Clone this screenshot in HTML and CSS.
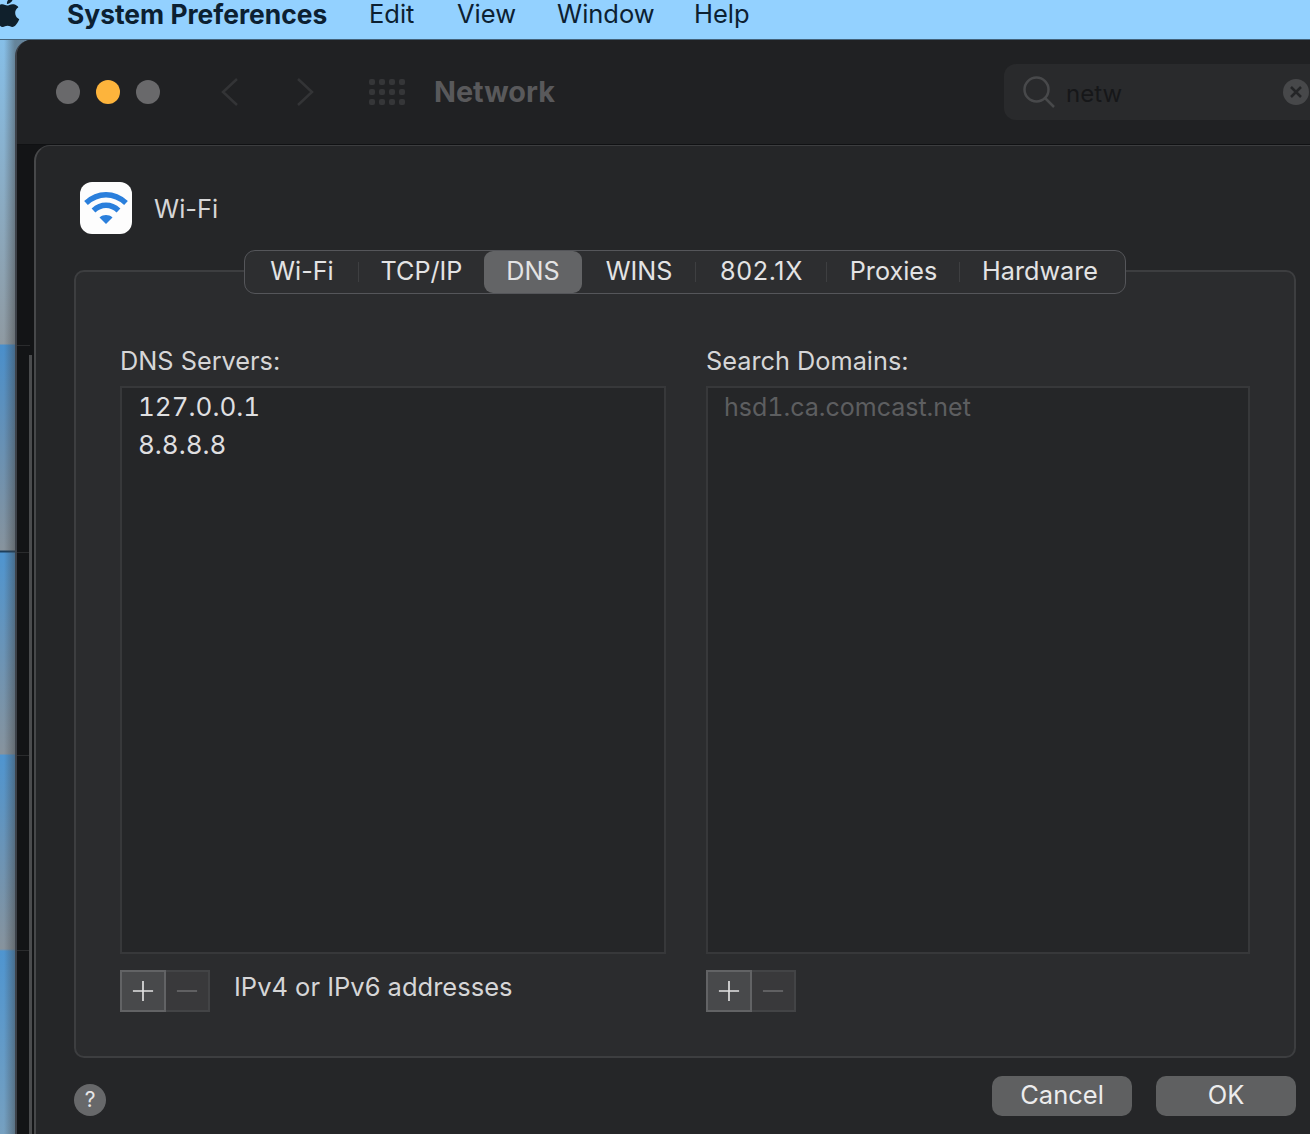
FILE: index.html
```html
<!DOCTYPE html>
<html lang="en">
<head>
    <meta charset="UTF-8">
    <meta name="viewport" content="width=device-width, initial-scale=1.0">
    <title>Network - DNS</title>
    <link rel="stylesheet" href="styles.css">
</head>
<body>
    <div class="menubar">
        <svg class="apple" viewBox="0 0 24 24"><path d="M12.152 6.896c-.948 0-2.415-1.078-3.96-1.04-2.04.027-3.91 1.183-4.961 3.014-2.117 3.675-.546 9.103 1.519 12.09 1.013 1.454 2.208 3.09 3.792 3.039 1.52-.065 2.09-.987 3.935-.987 1.831 0 2.35.987 3.96.948 1.637-.026 2.676-1.48 3.676-2.948 1.156-1.688 1.636-3.325 1.662-3.415-.039-.013-3.182-1.221-3.22-4.857-.026-3.04 2.48-4.494 2.597-4.559-1.429-2.09-3.623-2.324-4.39-2.376-2-.156-3.675 1.09-4.61 1.09zM15.53 3.83c.843-1.012 1.4-2.427 1.245-3.83-1.207.052-2.662.805-3.532 1.818-.78.896-1.454 2.338-1.273 3.714 1.338.104 2.715-.688 3.559-1.701"/></svg>
        <span class="menu-app">System Preferences</span>
        <span class="menu-item">Edit</span>
        <span class="menu-item">View</span>
        <span class="menu-item">Window</span>
        <span class="menu-item">Help</span>
    </div>

    <div class="window">
        <div class="titlebar">
            <div class="lights">
                <span class="light"></span>
                <span class="light light-on"></span>
                <span class="light"></span>
            </div>
            <svg class="chevron chevron-back" viewBox="0 0 20 30"><path d="M17 2 3 15l14 13"/></svg>
            <svg class="chevron chevron-next" viewBox="0 0 20 30"><path d="M3 2l14 13L3 28"/></svg>
            <div class="grid-icon">
                <i></i><i></i><i></i><i></i><i></i><i></i><i></i><i></i><i></i><i></i><i></i><i></i>
            </div>
            <span class="window-title">Network</span>
            <div class="search">
                <svg class="search-icon" viewBox="0 0 32 32"><circle cx="13.5" cy="13.5" r="12"/><path d="M22 22l9 9"/></svg>
                <span class="search-text">netw</span>
                <svg class="search-clear" viewBox="0 0 26 26"><circle cx="13" cy="13" r="13"/><path d="M8 8l10 10M18 8 8 18"/></svg>
            </div>
        </div>

        <div class="sheet">
            <div class="sheet-head">
                <div class="wifi-icon">
                    <svg viewBox="0 0 52 52"><path d="M6 21C18 10 34 10 46 21M13.500 28.500C21 21.500 31 21.500 38.500 28.500" /><path class="wifi-dot" d="M19.500 35.500C23.500 32.300 28.500 32.300 32.500 35.500L26 42z"/></svg>
                </div>
                <span class="sheet-title">Wi-Fi</span>
            </div>

            <div class="panel">
                <div class="tabs">
                    <span class="tab tab-wifi">Wi-Fi</span>
                    <span class="tab tab-tcp">TCP/IP</span>
                    <span class="tab tab-dns active">DNS</span>
                    <span class="tab tab-wins">WINS</span>
                    <span class="tab tab-8021">802.1X</span>
                    <span class="tab tab-proxies">Proxies</span>
                    <span class="tab tab-hardware">Hardware</span>
                </div>

                <div class="columns">
                    <div class="column column-dns">
                        <div class="list-label">DNS Servers:</div>
                        <div class="list">
                            <div class="list-row">127.0.0.1</div>
                            <div class="list-row">8.8.8.8</div>
                        </div>
                        <div class="list-foot">
                            <div class="stepper">
                                <span class="step step-add"><svg viewBox="0 0 24 24"><path d="M12 1v22M1 12h22"/></svg></span>
                                <span class="step step-remove"><svg viewBox="0 0 24 24"><path d="M1 12h22"/></svg></span>
                            </div>
                            <span class="hint">IPv4 or IPv6 addresses</span>
                        </div>
                    </div>
                    <div class="column column-search">
                        <div class="list-label">Search Domains:</div>
                        <div class="list">
                            <div class="list-row muted">hsd1.ca.comcast.net</div>
                        </div>
                        <div class="list-foot">
                            <div class="stepper">
                                <span class="step step-add"><svg viewBox="0 0 24 24"><path d="M12 1v22M1 12h22"/></svg></span>
                                <span class="step step-remove"><svg viewBox="0 0 24 24"><path d="M1 12h22"/></svg></span>
                            </div>
                        </div>
                    </div>
                </div>
            </div>

            <div class="sheet-foot">
                <span class="help">?</span>
                <div class="actions">
                    <button class="btn">Cancel</button>
                    <button class="btn">OK</button>
                </div>
            </div>
        </div>
    </div>
</body>
</html>
```

FILE: styles.css
```css
* {
    box-sizing: border-box;
}
html, body {
    height: 100%;
}
body {
    margin: 0;
    height: 1134px;
    overflow: hidden;
    font-family: Inter, "Liberation Sans", sans-serif;
    /* wallpaper strip at the left edge, window shadow on top of it */
    background:
        linear-gradient(to right, rgba(60, 60, 60, 0) 4px, rgba(60, 60, 60, .45) 15px),
        linear-gradient(to bottom,
            #86bfe8 39px, #8f9aa2 344px,
            #4a8fcb 345px, #87939d 550px,
            #1d3f5c 551px, #1d3f5c 552px,
            #4f95d0 553px, #87939d 754px,
            #4f95d0 755px, #87939d 949px,
            #4f95d0 951px, #76a0c0 1134px);
}

/* menu bar */
.menubar {
    height: 40px;
    background-color: #93d1ff;
    color: #0c2031;
    display: flex;
    font-size: 25.5px;
    line-height: 28px;
    padding-left: 67px;
    position: relative;
    border-bottom: 1px solid #44627a;
}
.apple {
    position: absolute;
    left: -8px;
    top: -3px;
    width: 30px;
    height: 30px;
    fill: #10202c;
}
.menu-app {
    font-size: 26.4px;
    font-weight: 700;
    width: 302px;
}
.menu-item:nth-child(3) { width: 88px; }
.menu-item:nth-child(4) { width: 100px; }
.menu-item:nth-child(5) { width: 137px; }

/* window */
.window {
    margin-left: 15px;
    height: 1094px;
    /* second window edge and its seams, seen beside the sheet */
    background:
        linear-gradient(#4a4b4d, #4a4b4d) 12px 315px / 3px 100% no-repeat,
        linear-gradient(#2a2b2d, #2a2b2d) 0 305px / 13px 1px no-repeat,
        linear-gradient(#2a2b2d, #2a2b2d) 0 512px / 13px 1px no-repeat,
        linear-gradient(#2a2b2d, #2a2b2d) 0 715px / 13px 1px no-repeat,
        linear-gradient(#2a2b2d, #2a2b2d) 0 910px / 13px 1px no-repeat,
        #131416;
    border-top-left-radius: 16px;
    border-left: 2px solid #3d4148;
    overflow: hidden;
}
.titlebar {
    height: 105px;
    background-color: #202123;
    display: flex;
    align-items: center;
    position: relative;
    border-bottom: 1px solid #101113;
}
.lights {
    display: flex;
    gap: 16px;
    margin-left: 39px;
}
.light {
    width: 24px;
    height: 24px;
    border-radius: 50%;
    background-color: #69696b;
}
.light-on {
    background-color: #fdb43c;
}
.chevron {
    width: 20px;
    height: 30px;
    fill: none;
    stroke: #333436;
    stroke-width: 2.500;
}
.chevron-back { margin-left: 60px; }
.chevron-next { margin-left: 55px; }
.grid-icon {
    display: grid;
    grid-template-columns: repeat(4, 6px);
    grid-auto-rows: 6px;
    gap: 4px;
    margin-left: 54px;
}
.grid-icon i {
    background-color: #353638;
    border-radius: 2px;
}
.window-title {
    margin-left: 29px;
    padding-bottom: 2px;
    font-size: 28.8px;
    font-weight: 700;
    color: #59595b;
}
.search {
    position: absolute;
    left: 987px;
    top: 24px;
    width: 330px;
    height: 56px;
    background-color: #292a2c;
    border-radius: 12px;
    display: flex;
    align-items: center;
}
.search-icon {
    width: 32px;
    height: 32px;
    margin-left: 19px;
    fill: none;
    stroke: #48494b;
    stroke-width: 2.500;
}
.search-text {
    margin-left: 11px;
    padding-top: 3px;
    font-size: 24px;
    color: #161719;
}
.search-clear {
    position: absolute;
    left: 279px;
    top: 15px;
    width: 26px;
    height: 26px;
}
.search-clear circle { fill: #47484a; }
.search-clear path {
    stroke: #242527;
    stroke-width: 2.500;
}

/* sheet */
.sheet {
    margin-left: 17px;
    height: 989px;
    background-color: #252628;
    border-top-left-radius: 16px;
    border-left: 2px solid #47484a;
    border-top: 1px solid #3c3d3f;
    padding: 36px 14px 0 38px;
}
.sheet-head {
    display: flex;
    align-items: center;
    gap: 22px;
    margin-left: 6px;
    height: 52px;
}
.wifi-icon {
    width: 52px;
    height: 52px;
    border-radius: 12px;
    background-color: #fdfdfd;
}
.wifi-icon svg {
    display: block;
    fill: none;
    stroke: #2a7fdc;
    stroke-width: 5.500;
}
.wifi-dot {
    fill: #2a7fdc;
    stroke: none;
}
.sheet-title {
    font-size: 25.5px;
    color: #d6d6d7;
}
.panel {
    margin-top: 36px;
    height: 788px;
    background-color: #2b2c2e;
    border: 2px solid #3d3e40;
    border-radius: 10px;
    position: relative;
}
.tabs {
    position: absolute;
    left: 168px;
    top: -22px;
    width: 882px;
    height: 44px;
    display: flex;
    background-color: #2d2e30;
    border: 1px solid #55565a;
    border-radius: 11px;
    font-size: 25.2px;
    line-height: 40px;
    color: #e3e3e4;
}
.tab {
    text-align: center;
    position: relative;
}
.tab-wifi { width: 114px; }
.tab-tcp { width: 125px; }
.tab-dns { width: 98px; }
.tab-wins { width: 114px; }
.tab-8021 { width: 131px; letter-spacing: .6px; }
.tab-proxies { width: 133px; }
.tab-hardware { flex: 1; padding-right: 5px; }
.tab-wifi::after, .tab-wins::after, .tab-8021::after, .tab-proxies::after {
    content: "";
    position: absolute;
    right: 0;
    top: 11px;
    height: 20px;
    width: 1px;
    background-color: #3e3f41;
}
.active {
    background-color: #636466;
    border-radius: 9px;
    height: 42px;
}
.columns {
    display: flex;
    padding: 72px 0 0 44px;
}
.column-dns { width: 586px; }
.column-search { width: 544px; }
.list-label {
    font-size: 25.3px;
    line-height: 34px;
    color: #d6d6d7;
}
.column-dns .list { width: 546px; }
.list {
    margin-top: 8px;
    height: 568px;
    background-color: #252628;
    border: 2px solid #37383a;
    padding-top: 1px;
    font-size: 26px;
    color: #dfdfe0;
    font-variant-numeric: tabular-nums;
}
.list-row {
    height: 38px;
    line-height: 36px;
    padding-left: 16px;
}
.muted {
    font-size: 25px;
    color: #5d5e60;
}
.list-foot {
    display: flex;
    align-items: center;
    margin-top: 16px;
    gap: 24px;
}
.stepper {
    display: flex;
    width: 90px;
    height: 42px;
}
.step {
    display: flex;
    align-items: center;
    justify-content: center;
    height: 42px;
    flex: 1;
    background-color: #39393b;
    border: 2px solid #434446;
    border-left: 0;
}
.step svg {
    width: 22px;
    height: 22px;
    fill: none;
    stroke: #69696b;
    stroke-width: 1.800;
}
.step-add {
    flex: 0 0 46px;
    background-color: #48494b;
    border: 2px solid #626365;
}
.step-add svg {
    stroke: #e2e2e3;
}
.hint {
    font-size: 25.5px;
    color: #d6d6d7;
    margin-top: -10px;
}

.sheet-foot {
    display: flex;
    justify-content: space-between;
    align-items: flex-start;
    margin-top: 18px;
    width: 1222px;
}
.help {
    margin-top: 8px;
    width: 32px;
    height: 32px;
    border-radius: 50%;
    background-color: #67686a;
    color: #e6e6e7;
    font-size: 21px;
    line-height: 32px;
    text-align: center;
}
.actions {
    display: flex;
    gap: 24px;
}
.btn {
    width: 140px;
    height: 40px;
    border: 0;
    border-radius: 10px;
    background-color: #5f6061;
    color: #ececed;
    font-family: inherit;
    font-size: 25.5px;
    padding: 0 0 3px;
}
```
